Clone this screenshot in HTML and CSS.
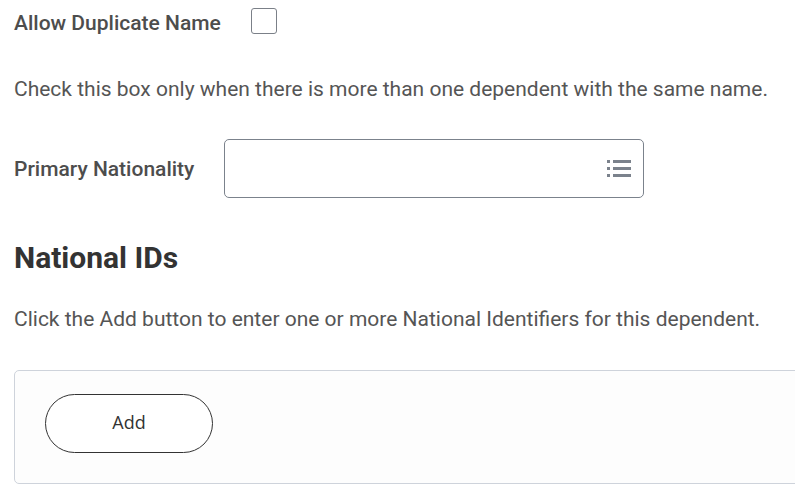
FILE: index.html
```html
<!DOCTYPE html>
<html>
<head>
<meta charset="utf-8">
<link rel="stylesheet" href="styles.css">
</head>
<body>
<div class="page">
  <div class="row row-dup">
    <span class="label label-dup">Allow Duplicate Name</span>
    <span class="checkbox"></span>
  </div>
  <p class="text text-first">Check this box only when there is more than one dependent with the same name.</p>
  <div class="row row-nat">
    <span class="label label-nat">Primary Nationality</span>
    <div class="input">
      <svg class="list-icon" width="24" height="20" viewBox="0 0 24 20">
        <rect x="0" y="1" width="3" height="3" fill="#7b828c"/>
        <rect x="6" y="1" width="18" height="3" fill="#7b828c"/>
        <rect x="0" y="8" width="3" height="3" fill="#7b828c"/>
        <rect x="6" y="8" width="18" height="3" fill="#7b828c"/>
        <rect x="0" y="15" width="3" height="3" fill="#7b828c"/>
        <rect x="6" y="15" width="18" height="3" fill="#7b828c"/>
      </svg>
    </div>
  </div>
  <h2 class="heading">National IDs</h2>
  <p class="text text-second">Click the Add button to enter one or more National Identifiers for this dependent.</p>
  <div class="card">
    <button class="btn">Add</button>
  </div>
</div>
</body>
</html>
```

FILE: styles.css
```css
html, body {
  margin: 0;
  padding: 0;
  background: #ffffff;
  overflow: hidden;
}
.page {
  padding-left: 14px;
  font-family: Roboto, "Liberation Sans", sans-serif;
}
.row {
  display: flex;
  align-items: flex-start;
  gap: 30px;
}
.row-dup {
  padding-top: 8px;
}
.label {
  font-size: 21px;
  font-weight: 500;
  line-height: 24px;
  color: #4d4d4d;
}
.label-dup {
  margin-top: 3px;
}
.checkbox {
  width: 24px;
  height: 24px;
  border: 1px solid #7b8088;
  border-radius: 3px;
  background: #fff;
}
.text {
  margin: 0;
  font-size: 21px;
  line-height: 24px;
  color: #555555;
}
.text-first {
  margin-top: 42px;
}
.row-nat {
  margin-top: 38px;
}
.label-nat {
  margin-top: 18px;
}
.input {
  width: 406px;
  height: 57px;
  border: 1px solid #7b828c;
  border-radius: 5px;
  display: flex;
  align-items: center;
  justify-content: flex-end;
  padding-right: 12px;
}
.list-icon {
  display: block;
  margin-top: 1px;
}
.heading {
  margin: 43px 0 0 0;
  font-size: 30px;
  font-weight: 700;
  line-height: 34px;
  color: #333333;
}
.text-second {
  margin-top: 32px;
}
.card {
  margin-top: 39px;
  margin-right: -30px;
  border: 1px solid #ced3db;
  border-radius: 5px;
  background: #fdfdfd;
  padding: 23px 0 30px 30px;
}
.btn {
  display: block;
  width: 168px;
  height: 59px;
  border: 1.5px solid #333333;
  border-radius: 30px;
  background: #ffffff;
  font-family: "Open Sans", "Noto Sans", sans-serif;
  font-size: 18px;
  font-weight: 500;
  color: #333333;
  padding: 0 0 3px 0;
}
```
